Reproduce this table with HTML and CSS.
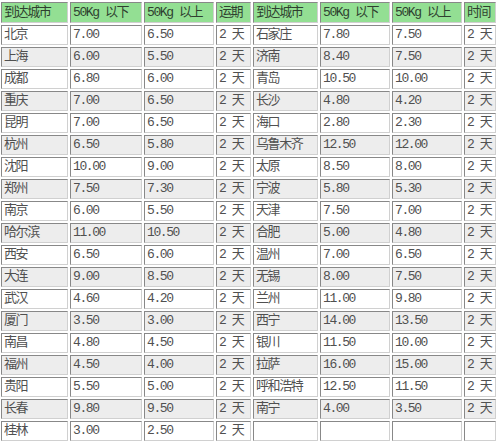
FILE: index.html
```html
<!DOCTYPE html>
<html lang="zh-CN">
<head>
<meta charset="utf-8">
<link rel="stylesheet" href="styles.css">
</head>
<body>
<table class="rates">
<colgroup>
<col class="c-city"><col class="c-p1"><col class="c-p2"><col class="c-t1">
<col class="c-city2"><col class="c-p3"><col class="c-p4"><col class="c-t2">
</colgroup>
<thead>
<tr><th>到达城市</th><th>50Kg 以下</th><th>50Kg 以上</th><th>运期</th><th>到达城市</th><th>50Kg 以下</th><th>50Kg 以上</th><th>时间</th></tr>
</thead>
<tbody>
<tr><td>北京</td><td>7.00</td><td>6.50</td><td>2 天</td><td>石家庄</td><td>7.80</td><td>7.50</td><td>2 天</td></tr>
<tr><td>上海</td><td>6.00</td><td>5.50</td><td>2 天</td><td>济南</td><td>8.40</td><td>7.50</td><td>2 天</td></tr>
<tr><td>成都</td><td>6.80</td><td>6.00</td><td>2 天</td><td>青岛</td><td>10.50</td><td>10.00</td><td>2 天</td></tr>
<tr><td>重庆</td><td>7.00</td><td>6.50</td><td>2 天</td><td>长沙</td><td>4.80</td><td>4.20</td><td>2 天</td></tr>
<tr><td>昆明</td><td>7.00</td><td>6.50</td><td>2 天</td><td>海口</td><td>2.80</td><td>2.30</td><td>2 天</td></tr>
<tr><td>杭州</td><td>6.50</td><td>5.80</td><td>2 天</td><td>乌鲁木齐</td><td>12.50</td><td>12.00</td><td>2 天</td></tr>
<tr><td>沈阳</td><td>10.00</td><td>9.00</td><td>2 天</td><td>太原</td><td>8.50</td><td>8.00</td><td>2 天</td></tr>
<tr><td>郑州</td><td>7.50</td><td>7.30</td><td>2 天</td><td>宁波</td><td>5.80</td><td>5.30</td><td>2 天</td></tr>
<tr><td>南京</td><td>6.00</td><td>5.50</td><td>2 天</td><td>天津</td><td>7.50</td><td>7.00</td><td>2 天</td></tr>
<tr><td>哈尔滨</td><td>11.00</td><td>10.50</td><td>2 天</td><td>合肥</td><td>5.00</td><td>4.80</td><td>2 天</td></tr>
<tr><td>西安</td><td>6.50</td><td>6.00</td><td>2 天</td><td>温州</td><td>7.00</td><td>6.50</td><td>2 天</td></tr>
<tr><td>大连</td><td>9.00</td><td>8.50</td><td>2 天</td><td>无锡</td><td>8.00</td><td>7.50</td><td>2 天</td></tr>
<tr><td>武汉</td><td>4.60</td><td>4.20</td><td>2 天</td><td>兰州</td><td>11.00</td><td>9.80</td><td>2 天</td></tr>
<tr><td>厦门</td><td>3.50</td><td>3.00</td><td>2 天</td><td>西宁</td><td>14.00</td><td>13.50</td><td>2 天</td></tr>
<tr><td>南昌</td><td>4.80</td><td>4.50</td><td>2 天</td><td>银川</td><td>11.50</td><td>10.00</td><td>2 天</td></tr>
<tr><td>福州</td><td>4.50</td><td>4.00</td><td>2 天</td><td>拉萨</td><td>16.00</td><td>15.00</td><td>2 天</td></tr>
<tr><td>贵阳</td><td>5.50</td><td>5.00</td><td>2 天</td><td>呼和浩特</td><td>12.50</td><td>11.50</td><td>2 天</td></tr>
<tr><td>长春</td><td>9.80</td><td>9.50</td><td>2 天</td><td>南宁</td><td>4.00</td><td>3.50</td><td>2 天</td></tr>
<tr><td>桂林</td><td>3.00</td><td>2.50</td><td>2 天</td><td></td><td></td><td></td><td></td></tr>
</tbody>
</table>
</body>
</html>
```
FILE: styles.css
```css
html, body {
  margin: 0;
  padding: 0;
  background: #ffffff;
}
.rates {
  margin: 0 0 0 -1px;
  border-collapse: separate;
  border-spacing: 2px;
  table-layout: fixed;
  width: 499px;
  font-family: "Liberation Mono", "Noto Sans CJK SC", monospace;
  font-size: 13px;
  line-height: 16px;
  letter-spacing: -1.4px;
  color: #505050;
}
.c-city { width: 67px; }
.c-p1 { width: 72px; }
.c-p2 { width: 70px; }
.c-t1 { width: 35px; }
.c-city2 { width: 65px; }
.c-p3 { width: 70px; }
.c-p4 { width: 70px; }
.c-t2 { width: 32px; }
.rates th,
.rates td {
  box-sizing: border-box;
  height: 20px;
  padding: 0 0 0 2px;
  text-align: left;
  vertical-align: middle;
  font-weight: normal;
  white-space: nowrap;
  overflow: hidden;
  border: 1px solid;
  border-color: #888888 #d0d0d0 #d0d0d0 #888888;
}
.rates th {
  height: 21px;
  background: #93df93;
  color: #2f3f2f;
}
.rates tbody tr:nth-child(odd) td { background: #ffffff; }
.rates tbody tr:nth-child(even) td { background: #ededed; }
```
